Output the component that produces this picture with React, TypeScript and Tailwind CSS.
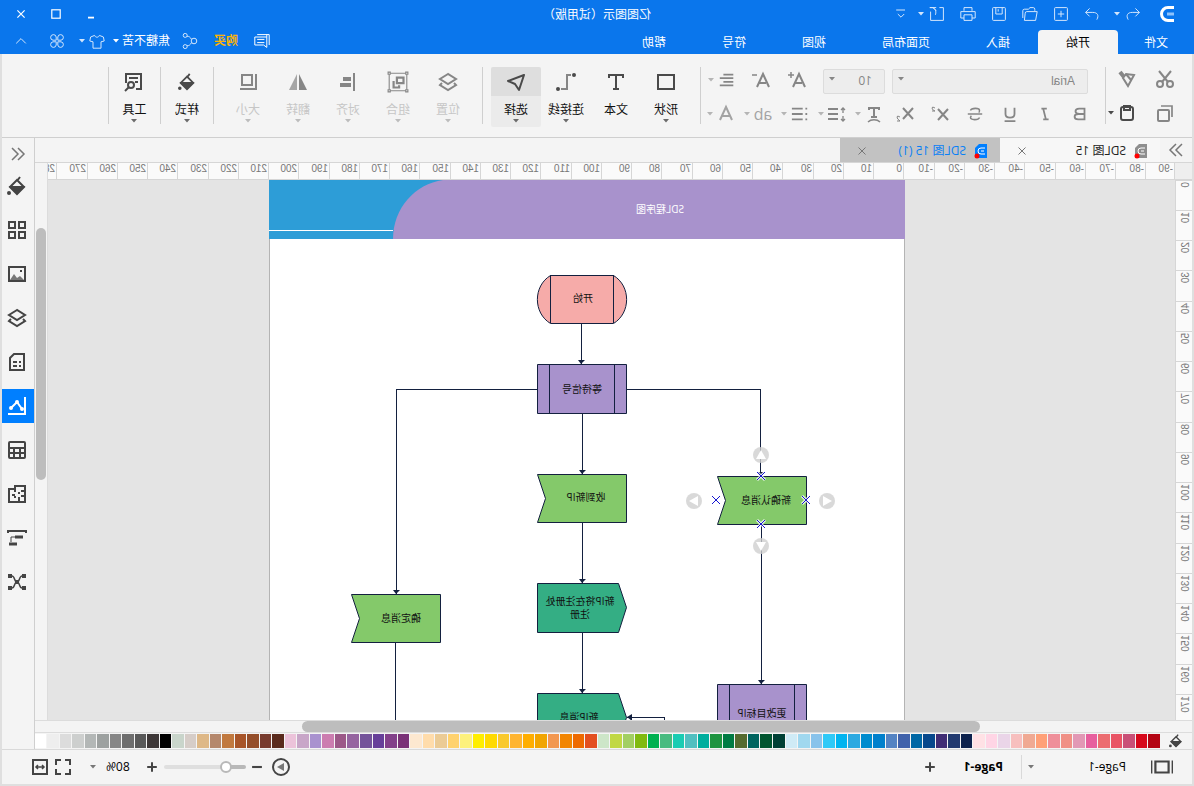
import type { ReactNode } from "react";

const palette = [
  "#b40413", "#d7081b", "#c95077", "#e95465", "#ec6d71", "#e75f9e", "#e298b5", "#f09086", "#ef8f9a", "#ffa078",
  "#f0a993", "#f7bfbe", "#ead5e8", "#ffd5e5", "#ffe1e5", "#0d224d", "#223a70", "#402d75", "#07488c", "#0067a5",
  "#4062ab", "#5383c3", "#0080cc", "#008cce", "#2ca9e1", "#00b4f0", "#2fc9f7", "#89c3eb", "#a0d8ef", "#cfebf6",
  "#004035", "#005530", "#00645f", "#556b2f", "#007b43", "#1e9440", "#00ae9e", "#51bfc0", "#1accb2", "#48bb80",
  "#00b150", "#80ba10", "#a2cf62", "#c1d843", "#cde6c8", "#e34f1f", "#ee6a00", "#f28500", "#f29850", "#f1a500",
  "#ffae00", "#ffb531", "#f9c92d", "#ffda00", "#ffee00", "#fdf17c", "#ffd26e", "#ebcb95", "#ffdcab", "#fde8d0",
  "#7a3278", "#83408a", "#673f99", "#74539a", "#9664a0", "#9c5888", "#cc7db0", "#a992cf", "#c8a6c8", "#ecc3da",
  "#5a2a1c", "#783b2e", "#954e2a", "#a85529", "#c1793f", "#b5886c", "#deb887", "#d6cdc8", "#c9d5cb", "#000000",
  "#3e3838", "#595959", "#6e6e6e", "#868686", "#9da1a0", "#b3b7b6", "#cdcfce", "#dcdcdc", "#eeeeee", "#ffffff",
];

const menuTabs = ["插入", "页面布局", "视图", "符号", "帮助"];
const xMarks = Array.from({ length: 38 }, (_, i) => i * 10 - 90);
const yMarks = Array.from({ length: 18 }, (_, i) => i * 10);

type IconProps = { children: ReactNode; className?: string; w?: number };

// every icon is drawn on a 20 unit grid
function Icon({ children, className = "size-5", w = 2 }: IconProps) {
  return (
    <svg viewBox="0 0 20 20" className={`${className} shrink-0`} fill="none" stroke="currentColor" strokeWidth={w}>
      {children}
    </svg>
  );
}

function Caret({ className = "" }: { className?: string }) {
  return (
    <svg viewBox="0 0 6 4" className={`h-1 w-1.5 shrink-0 ${className}`} fill="currentColor">
      <path d="M0 0h6L3 3.5z" />
    </svg>
  );
}

function CaretButton({ label }: { label: string }) {
  return (
    <button aria-label={label} className="flex h-6 w-2 items-center justify-center">
      <Caret />
    </button>
  );
}

function Bucket({ className }: { className?: string }) {
  return (
    <Icon className={className}>
      <path d="M7 1l3 4M10 4l7 7-7 7-7-7z" />
      <path d="M4 11h12l-6 6z" fill="currentColor" />
      <circle cx="18" cy="17" r="1" fill="currentColor" />
    </Icon>
  );
}

function Layers({ className }: { className?: string }) {
  return (
    <Icon className={className}>
      <path d="M10 2l8 5-8 5-8-5z" />
      <path d="M4 11l-2 2 8 5 8-5-2-2" />
    </Icon>
  );
}

function Divider({ className = "" }: { className?: string }) {
  return <div className={`h-[57px] w-px bg-[#cfcfcf] ${className}`} />;
}

function QuickButton({ label, children }: { label: string; children: ReactNode }) {
  return (
    <button aria-label={label} className="flex size-6 items-center justify-center">
      <Icon className="size-4" w={1.25}>{children}</Icon>
    </button>
  );
}

function TitleBar() {
  return (
    <div className="grid h-7 grid-cols-[1fr_auto_1fr] items-center text-white">
      <div className="flex items-center pl-[19px]">
        <svg viewBox="0 0 16 16" className="size-4" fill="none" stroke="#fff" strokeWidth="3">
          <path d="M1 1.500h6a6.500 6.500 0 0 1 0 13H1" />
          <path d="M1 8h7" stroke="#8fc2fb" />
        </svg>
        <div className="ml-[14px] flex items-center text-[#d3e6fc]">
          <QuickButton label="撤销">
            <path d="M7 3L2 8l5 5M2 8h9c6 0 8 4 5 9" />
          </QuickButton>
          <CaretButton label="撤销列表" />
        </div>
        <div className="ml-[9px] flex items-center gap-[7px] text-[#d3e6fc]">
          <QuickButton label="重做">
            <path d="M13 3l5 5-5 5M18 8H9c-6 0-8 4-5 9" />
          </QuickButton>
          <QuickButton label="新建">
            <rect x="2" y="2" width="16" height="16" rx="1" />
            <path d="M10 6v8M6 10h8" />
          </QuickButton>
          <QuickButton label="打开">
            <path d="M4 6V4q0-2 2-2h4l2 2h5q2 0 2 2v9M1 7h13q2 0 2 2l1 9H3z" />
          </QuickButton>
          <QuickButton label="保存">
            <rect x="2" y="2" width="16" height="16" rx="1" />
            <path d="M6 2v8h8V2M11 4v3" />
          </QuickButton>
          <QuickButton label="打印">
            <path d="M5 6V2h10v4M5 15H1V7h18v8h-4M5 11h10v7H5z" />
          </QuickButton>
          <QuickButton label="导出">
            <path d="M7 2H2v16h16V7M11 6l4-4h4M15 2c-4 2-4 6-3 9M11 2h8" />
          </QuickButton>
        </div>
        <div className="flex items-center gap-1 text-[#d3e6fc]">
          <CaretButton label="导出列表" />
          <QuickButton label="更多">
            <path d="M5 5h11M6 10l4 4 4-4" />
          </QuickButton>
        </div>
      </div>
      <h1 className="pt-0.5 text-xs">亿图图示（试用版）</h1>
      <div className="flex justify-end gap-[11px] pr-[9px]">
        <button aria-label="最小化" className="flex size-6 items-center justify-center">
          <Icon className="size-3" w={3}><path d="M5 16h10" /></Icon>
        </button>
        <button aria-label="最大化" className="flex size-6 items-center justify-center">
          <Icon className="size-3"><rect x="3" y="3" width="14" height="14" /></Icon>
        </button>
        <button aria-label="关闭" className="flex size-6 items-center justify-center">
          <Icon className="size-3"><path d="M4 4l12 12M16 4L4 16" /></Icon>
        </button>
      </div>
    </div>
  );
}

function MenuBar() {
  return (
    <div className="flex h-[26px] items-stretch justify-between text-xs text-white">
      <nav className="flex pt-0.5">
        <button className="w-[76px] pt-0.5">文件</button>
        <button className="w-20 rounded-t-sm bg-[#f4f4f4] pt-0.5 text-black">开始</button>
        {menuTabs.map((tab) => (
          <button key={tab} className="px-7 pt-0.5">{tab}</button>
        ))}
      </nav>
      <div className="flex items-center pr-[13px]">
        <button aria-label="消息">
          <Icon className="size-4" w={1.25}>
            <path d="M4 5h15v10H8l-4 3zM4 5V2M1 15V2h15M7 8h9M7 12h9" />
          </Icon>
        </button>
        <button className="ml-4 font-semibold text-[#ffb400]">购买</button>
        <button aria-label="分享" className="ml-4 text-[#d3e6fc]">
          <Icon className="size-4" w={1.25}>
            <circle cx="5" cy="10" r="3.500" />
            <circle cx="16" cy="3" r="2.500" />
            <circle cx="16" cy="17" r="2.500" />
            <path d="M8 8c2-3 3-4 6-4M8 12c2 3 3 4 6 4" />
          </Icon>
        </button>
        <button className="ml-3 flex items-center gap-[3px]">焦糖不苦 <Caret /></button>
        <button aria-label="皮肤" className="ml-2 flex items-center gap-1 text-[#d3e6fc]">
          <Icon className="size-4" w={1.25}>
            <path d="M7 3c1 3 5 3 6 0l5 2 1 5-4 1v8H5v-8l-4-1 1-5z" />
          </Icon>
          <Caret />
        </button>
        <button aria-label="应用" className="ml-[14px] text-[#d3e6fc]">
          <Icon className="size-4" w={1.25}>
            <path d="M9 9V5a3.500 3.500 0 1 0-4 4zM11 9V5a3.500 3.500 0 1 1 4 4zM9 11v4a3.500 3.500 0 1 1-4-4zM11 11v4a3.500 3.500 0 1 0 4-4z" />
          </Icon>
        </button>
        <button aria-label="收起" className="ml-5 text-[#d3e6fc]">
          <Icon className="size-4" w={1.25}><path d="M4 13l6-6 6 6" /></Icon>
        </button>
      </div>
    </div>
  );
}

function Tool({ label, children }: { label: string; children: ReactNode }) {
  return (
    <button aria-label={label} className="flex size-6 shrink-0 items-center justify-center">
      {children}
    </button>
  );
}

function DropTool({ label, children }: { label: string; children: ReactNode }) {
  return (
    <div className="flex items-center">
      <Tool label={label}>{children}</Tool>
      <span className="text-[#b5b5b5]"><CaretButton label={`${label}选项`} /></span>
    </div>
  );
}

function FontTools() {
  return (
    <div className="flex flex-col gap-2 pl-[13px] text-[#868686]">
      <div className="flex items-center">
        <div className="relative ml-1">
          <select aria-label="字体" className="h-[25px] w-[196px] appearance-none rounded-xs border border-[#dcdcdc] bg-[#ededed] pl-3 font-['Liberation_Sans',sans-serif] text-xs">
            <option>Arial</option>
          </select>
          <Caret className="pointer-events-none absolute top-2.5 right-1.5" />
        </div>
        <div className="relative ml-[7px]">
          <select aria-label="字号" className="h-[25px] w-[62px] appearance-none rounded-xs border border-[#dcdcdc] bg-[#ededed] pl-3 text-xs">
            <option>10</option>
          </select>
          <Caret className="pointer-events-none absolute top-2.5 right-1.5" />
        </div>
        <div className="ml-[14px] flex gap-3">
          <Tool label="增大字号">
            <Icon><path d="M2 17L8 4l6 13M5 13h7" /><path d="M16 2v6M13 5h6" strokeWidth="1.500" /></Icon>
          </Tool>
          <Tool label="减小字号">
            <Icon><path d="M2 17L8 4l6 13M5 13h7" /><path d="M14 5h5" strokeWidth="1.500" /></Icon>
          </Tool>
        </div>
        <div className="ml-[10px]">
          <DropTool label="对齐方式">
            <Icon className="size-[18px]"><path d="M3 4h11M3 8h15M3 12h11M3 16h15" /></Icon>
          </DropTool>
        </div>
      </div>
      <div className="flex items-center">
        <div className="flex gap-[11px]">
          <Tool label="加粗">
            <Icon className="size-[18px]"><path d="M5 4h6q4 0 4 3t-4 3H5zM5 10h7q4 0 4 3t-4 3H5z" /></Icon>
          </Tool>
          <Tool label="斜体">
            <Icon className="size-[18px]"><path d="M8 4h6M6 16h6M12 4L9 16" /></Icon>
          </Tool>
          <Tool label="下划线">
            <Icon className="size-[18px]"><path d="M5 3v7q0 4 5 4t5-4V3M4 18h12" /></Icon>
          </Tool>
          <Tool label="删除线">
            <Icon className="size-[18px]"><path d="M15 6c-1-3-10-3-10 0 0 1 0 2 1 2M2 10h16M5 14c1 3 10 3 10 0 0-1 0-1-1-2" strokeWidth="1.700" /></Icon>
          </Tool>
          <Tool label="上标">
            <Icon><path d="M2 5l10 11M12 5L2 16" /><path d="M15 4q3-2 3 0t-3 3h3" strokeWidth="1" /></Icon>
          </Tool>
          <Tool label="下标">
            <Icon><path d="M2 4l10 11M12 4L2 15" /><path d="M15 13q3-2 3 0t-3 4h3" strokeWidth="1" /></Icon>
          </Tool>
        </div>
        <div className="ml-[7px] flex gap-[5px]">
          <DropTool label="文字效果">
            <Icon><path d="M5 6V4h10v2M10 4v9M7 13h6" /><path d="M4 18c3-3 9-3 12 0" strokeWidth="1.500" /></Icon>
          </DropTool>
          <DropTool label="行距">
            <Icon><path d="M9 5h10M9 10h10M9 15h10" /><path d="M4 4v5M4 12v5M2 6l2-2 2 2M2 15l2 2 2-2" strokeWidth="1.300" /></Icon>
          </DropTool>
          <DropTool label="项目符号">
            <Icon className="size-[18px]"><path d="M2 4h2M7 4h12M2 10h2M7 10h12M2 16h2M7 16h12" /></Icon>
          </DropTool>
          <DropTool label="高亮">
            <span className="text-base leading-5 text-[#a3a3a3]">ab</span>
          </DropTool>
          <DropTool label="字体颜色">
            <Icon><path d="M4 16L10 3l6 13M6 12h8" stroke="#a3a3a3" /></Icon>
          </DropTool>
        </div>
      </div>
    </div>
  );
}

type BigProps = { label: string; caret?: boolean; tone?: string; active?: boolean; width?: string; children: ReactNode };

function BigButton({ label, caret = true, tone = "text-[#4a4a4a]", active, width = "w-[50px]", children }: BigProps) {
  return (
    <button className={`flex h-[60px] flex-col items-center ${width} ${active ? "rounded-xs bg-[#ebebeb]" : ""}`}>
      <span className={`flex h-[29px] w-full items-center justify-center ${active ? "rounded-t-xs bg-[#dedede]" : ""} ${tone}`}>
        {children}
      </span>
      <span className={`mt-1.5 text-xs leading-4 ${tone === "text-[#868686]" ? "text-[#c6c6c6]" : "text-[#111]"}`}>{label}</span>
      {caret && <Caret className={`mt-px ${tone === "text-[#868686]" ? "text-[#bdbdbd]" : "text-[#6b6b6b]"}`} />}
    </button>
  );
}

function Ribbon() {
  return (
    <div className="flex h-[84px] items-start border-b border-[#cfcfcf] bg-[#f4f4f4] pt-[13px]">
      <div className="ml-[15px] grid w-[71px] shrink-0 grid-cols-[24px_32px] gap-x-[14px] gap-y-[10px] text-[#868686]">
        <Tool label="剪切">
          <Icon><circle cx="5" cy="15" r="3" /><circle cx="15" cy="15" r="3" /><path d="M4 2l9 11M16 2L7 13" /></Icon>
        </Tool>
        <Tool label="格式刷">
          <Icon><path d="M3 6l8-1 3 4-5 8z" /><path d="M13 8l4-5" strokeWidth="4" /><path d="M6 11l5-6" /></Icon>
        </Tool>
        <Tool label="复制">
          <Icon><path d="M3 14V3h11" strokeWidth="1.700" /><rect x="6" y="7" width="11" height="11" rx="1" /></Icon>
        </Tool>
        <div className="flex items-center text-[#4a4a4a]">
          <Tool label="粘贴">
            <Icon><rect x="4" y="4" width="12" height="13" rx="2" /><path d="M7 3h6v4H7z" strokeWidth="2" /></Icon>
          </Tool>
          <CaretButton label="粘贴选项" />
        </div>
      </div>
      <Divider />
      <FontTools />
      <Divider className="ml-[5px]" />
      <div className="ml-[9px] flex">
        <BigButton label="形状">
          <Icon><rect x="2" y="3" width="16" height="14" /></Icon>
        </BigButton>
        <BigButton label="文本" caret={false}>
          <Icon><path d="M3 6V3h14v3M10 3v14M7 17h6" /></Icon>
        </BigButton>
        <BigButton label="连接线">
          <Icon><path d="M5 3h4v14h6" stroke="#868686" /><circle cx="2" cy="3" r="1" fill="currentColor" /><circle cx="18" cy="17" r="1" fill="currentColor" /></Icon>
        </BigButton>
        <BigButton label="选择" active>
          <Icon><path d="M2 3l16 6-7 3-4 6z" strokeLinejoin="round" /></Icon>
        </BigButton>
      </div>
      <Divider className="ml-2" />
      <div className="ml-[9px] flex">
        <BigButton label="位置" tone="text-[#868686]"><Layers /></BigButton>
        <BigButton label="组合" tone="text-[#868686]">
          <Icon className="size-[22px]">
            <path d="M2 2h16v16H2z" strokeWidth="1" />
            <path d="M1 1h2v2H1zM17 1h2v2h-2zM1 17h2v2H1zM17 17h2v2h-2z" strokeWidth="1" fill="#f4f4f4" />
            <path d="M5 6h6v5H5z" /><path d="M14 9v6H9v-2" />
          </Icon>
        </BigButton>
        <BigButton label="对齐" tone="text-[#868686]">
          <Icon><path d="M4 1v18" /><path d="M7 7h8M7 13h11" strokeWidth="4" /></Icon>
        </BigButton>
        <BigButton label="翻转" tone="text-[#868686]">
          <Icon><path d="M9 2v16H1z" fill="currentColor" stroke="none" /><path d="M11 2v16h8z" fill="#a5a5a5" stroke="none" /></Icon>
        </BigButton>
        <BigButton label="大小" tone="text-[#868686]">
          <Icon><rect x="6" y="3" width="10" height="10" /><path d="M2 2v15h16" /></Icon>
        </BigButton>
      </div>
      <Divider className="ml-[9px]" />
      <BigButton label="样式" width="w-[52px]"><Bucket className="size-[18px]" /></BigButton>
      <Divider />
      <BigButton label="工具" width="w-[51px]">
        <Icon><path d="M8 17H3V2h15v9M6 6h9M6 10h3" /><circle cx="13" cy="13" r="3" /><path d="M15 15l4 4" /></Icon>
      </BigButton>
      <Divider />
    </div>
  );
}

function FileTab({ name, current }: { name: string; current?: boolean }) {
  return (
    <div className={`flex w-40 items-center justify-between pt-0.5 pr-[17px] pl-3 ${current ? "bg-[#c2c2c2] text-[#0a80f5]" : "bg-[#f7f7f7] text-[#222]"}`}>
      <button className="flex items-center gap-2 text-xs">
        <svg viewBox="0 0 14 16" className="h-4 w-3.5">
          <path d="M1 1h8l4 4v10H1z" fill={current ? "#007fff" : "#8e8e8e"} />
          <path d="M3 5h4a3 3 0 0 1 0 6H3M4 8h3" fill="none" stroke="#fff" />
          <circle cx="11" cy="13" r="2.500" fill="#f00" />
        </svg>
        {name}
      </button>
      <button aria-label={`关闭 ${name}`} className="text-[#777]">
        <Icon className="size-2.5"><path d="M3 3l14 14M17 3L3 17" /></Icon>
      </button>
    </div>
  );
}

function Box({ y, x, fill, kind }: { x: number; y: number; fill: string; kind: "input" | "output" | "process" }) {
  const shapes = {
    input: "M0 0H89L81 24 89 48H0z",
    output: "M89 0H8L0 24 8 49H89z",
    process: "M0 0H89V49H0zM12 0V49M77 0V49",
  };
  return <path d={shapes[kind]} transform={`translate(${x + 0.5} ${y + 0.5})`} fill={fill} />;
}

function Diagram() {
  const arrows = [[323, 184], [144, 296], [508, 414], [322, 294], [322, 403], [322, 513], [143, 504]];
  const handles = [[144, 275, 0], [211, 321, 90], [144, 366, 180], [78, 321, 270]];
  const anchors = [[144, 296], [144, 344], [189, 320], [99, 320]];
  return (
    <svg width="636" height="1000" className="ml-[270px] shrink-0 bg-white">
      <rect width="636" height="59" fill="#2d9dd7" />
      <path d="M0 0H462C490 4 512 28 512 59H0z" fill="#a892cc" />
      <path d="M512 50.500H636" stroke="#fff" />
      <path d="M.5 59V1000M635.500 59V1000" stroke="#b4b4b4" />
      <g stroke="#13203f" strokeWidth="1" fill="none" shapeRendering="crispEdges">
        <path d="M323.500 143V184M278 209.500H144.500V296M368 209.500H508.500V414M322.500 233V294M322.500 342V403M322.500 452V513M143.500 345V504M509.500 462V1000M278 537.500H240.500V1000" />
      </g>
      <g stroke="#13203f" strokeWidth="1">
        <path d="M291.500 95.500H354.500C372 106 372 133 354.500 143.500H291.500C274 133 274 106 291.500 95.500zM291.500 95V143M354.500 95V143" fill="#f6aba9" />
        <Box x={278} y={184} kind="process" fill="#a892cc" />
        <Box x={278} y={294} kind="input" fill="#84c96a" />
        <Box x={98} y={296} kind="input" fill="#84c96a" />
        <Box x={464} y={414} kind="input" fill="#84c96a" />
        <Box x={278} y={403} kind="output" fill="#34ae84" />
        <Box x={278} y={513} kind="output" fill="#34ae84" />
        <Box x={98} y={504} kind="process" fill="#a892cc" />
      </g>
      {arrows.map(([x, y]) => (
        <path key={`${x}-${y}`} d={`M${x - 3} ${y - 4}h7l-3 4z`} fill="#13203f" />
      ))}
      <path d="M278 537l5-3v7z" transform="translate(556 0) scale(-1 1)" fill="#13203f" />
      <g fontSize="10" textAnchor="middle" fill="#111">
        <text x="245" y="33" fill="#fff">SDL程序图</text>
        <text x="322" y="122">开始</text>
        <text x="323" y="213">等待信号</text>
        <text x="319" y="321">收到新IP</text>
        <text x="139" y="324">新确认消息</text>
        <text x="504" y="442">确定消息</text>
        <text x="325" y="425">新IP将在注册处</text>
        <text x="325" y="438">注册</text>
        <text x="326" y="541">新IP消息</text>
        <text x="143" y="537">更改目标IP</text>
      </g>
      {handles.map(([x, y, turn]) => (
        <g key={turn} transform={`translate(${x} ${y}) rotate(${turn})`}>
          <circle r="8" fill="#d0d0d0" fillOpacity=".8" />
          <path d="M-5 4H5L0-5z" fill="#fff" />
        </g>
      ))}
      {anchors.map(([x, y]) => (
        <g key={`${x}-${y}`} transform={`translate(${x} ${y})`}>
          <path d="M-4-4L4 4M4-4L-4 4" stroke="#fff" strokeWidth="3" strokeOpacity=".8" />
          <path d="M-4-4L4 4M4-4L-4 4" stroke="#1414d2" strokeWidth="1" />
        </g>
      ))}
    </svg>
  );
}

function Workspace() {
  return (
    <div className="flex min-h-0 flex-1">
      <div className="flex min-w-0 flex-1 flex-col">
        <div className="flex h-[17px] shrink-0 overflow-hidden border-b border-[#d6d6d6] bg-[#fafafa] font-['Liberation_Sans',sans-serif] text-[10px] leading-3 text-[#777]">
          <div className="w-[17px] shrink-0 bg-[#eee]" />
          {xMarks.map((n, i) => (
            <div key={n} className={`shrink-0 border-l border-[#d6d6d6] pl-px ${i === 0 ? "w-[29px]" : i % 4 === 0 ? "w-[31px]" : "w-[30px]"}`}>{n}</div>
          ))}
        </div>
        <div className="flex min-h-0 flex-1">
          <div className="w-[17px] shrink-0 overflow-hidden border-r border-[#d6d6d6] bg-[#fafafa] font-['Liberation_Sans',sans-serif] text-[10px] leading-3 text-[#777]">
            {yMarks.map((n, i) => (
              <div key={n} className={`border-t border-[#d6d6d6] pt-px pr-1 [writing-mode:vertical-rl] ${i % 4 === 3 ? "h-[31px]" : "h-[30px]"}`}>{n}</div>
            ))}
          </div>
          <div className="flex min-w-0 flex-1 items-start overflow-hidden bg-[#e4e4e4]">
            <Diagram />
          </div>
        </div>
      </div>
      <div className="w-[13px] shrink-0 border-l border-[#dcdcdc] px-px pt-[65px]">
        <div className="h-[252px] rounded-full bg-[#bdbdbd]" />
      </div>
    </div>
  );
}

const panels: { label: string; icon: ReactNode }[] = [
  { label: "填充", icon: <Bucket /> },
  { label: "符号库", icon: <Icon><path d="M2 2h6v6H2zM12 2h6v6h-6zM2 12h6v6H2zM12 12h6v6h-6z" /></Icon> },
  { label: "图片", icon: <Icon><path d="M2 3h16v14H2z" /><path d="M3 16l4-4 3 2 3-4 4 6z" fill="#777" stroke="none" /><path d="M5 7h2" /></Icon> },
  { label: "图层", icon: <Layers /> },
  { label: "备注", icon: <Icon><path d="M3 2h10l4 4v12H3z" /><path d="M6 10h2M10 10h4M6 14h2M10 14h4" /></Icon> },
  { label: "图表", icon: <Icon><path d="M2 1v17h17" /><path d="M5 13l5-7 6 6" /><circle cx="5" cy="13" r="1" /><circle cx="10" cy="6" r="1" /><circle cx="16" cy="12" r="1" /></Icon> },
  { label: "表格", icon: <Icon><rect x="2" y="2" width="16" height="16" rx="1" /><path d="M2 8h16M2 13h16M7 8v10M13 8v10" /></Icon> },
  { label: "平面图", icon: <Icon><path d="M2 2h10v3h6v13H2zM2 7h4M8 10v-2M2 12h4M8 18v-5M12 5v3M12 12v2M12 11h3" /></Icon> },
  { label: "甘特图", icon: <Icon><path d="M1 5V3h18v2" /><path d="M4 9h8M10 16h8" strokeWidth="3" /><path d="M12 9h4v5" strokeWidth="1" /></Icon> },
  { label: "思维导图", icon: <Icon><path d="M1 4h4M15 4h4M1 16h4M15 16h4" strokeWidth="4" /><path d="M5 4c3 0 2 6 5 6s2-6 5-6M5 16c3 0 2-6 5-6s2 6 5 6" strokeWidth="1.500" /><path d="M8 10h4" strokeWidth="4" /></Icon> },
];

function SidePanel() {
  return (
    <aside className="flex w-[33px] shrink-0 flex-col border-l border-[#cfcfcf] bg-[#f4f4f4] text-[#444]">
      <button aria-label="展开面板" className="flex h-[31px] items-center justify-center text-[#777]">
        <Icon w={1.5}><path d="M10 4l-6 6 6 6M16 4l-6 6 6 6" /></Icon>
      </button>
      <div className="flex flex-col gap-2.5">
        {panels.map((panel) => (
          <button
            key={panel.label}
            aria-label={panel.label}
            className={`flex h-[34px] items-center justify-center pl-px ${panel.label === "图表" ? "bg-[#007fff] text-white" : ""}`}
          >
            {panel.icon}
          </button>
        ))}
      </div>
    </aside>
  );
}

function StatusBar() {
  return (
    <footer className="flex h-[34px] shrink-0 items-center justify-between bg-[#f4f4f4] text-xs text-[#444]">
      <div className="flex items-center">
        <button aria-label="页面视图" className="ml-[19px]">
          <Icon className="size-[22px]"><path d="M4 5h12v10H4z" /><path d="M.5 4v12M19.500 4v12" strokeWidth="1.500" /></Icon>
        </button>
        <button className="ml-[25px] flex items-center text-black">
          <span className="w-[92px] text-left">Page-1</span>
          <Caret className="text-[#777]" />
        </button>
        <div className="ml-1.5 h-6 w-px bg-[#d9d9d9]" />
        <button className="ml-[18px] font-bold text-black">Page-1</button>
        <button aria-label="添加页面" className="ml-[26px]">
          <Icon className="size-4"><path d="M10 4v12M4 10h12" strokeWidth="2.500" /></Icon>
        </button>
      </div>
      <div className="flex items-center pr-7">
        <button aria-label="播放">
          <Icon><circle cx="10" cy="10" r="8" /><path d="M7 6l7 4-7 4z" fill="#777" stroke="none" /></Icon>
        </button>
        <button aria-label="缩小" className="ml-[7px]">
          <Icon className="size-3.5" w={3}><path d="M3 10h14" /></Icon>
        </button>
        <input
          type="range"
          aria-label="缩放"
          min="0"
          max="100"
          defaultValue="19"
          className="ml-1 h-1 w-[82px] appearance-none rounded-full bg-[linear-gradient(to_right,#b8b8b8_19px,#dfdfdf_19px)] [&::-webkit-slider-thumb]:size-3 [&::-webkit-slider-thumb]:appearance-none [&::-webkit-slider-thumb]:rounded-full [&::-webkit-slider-thumb]:border-2 [&::-webkit-slider-thumb]:border-[#b8b8b8] [&::-webkit-slider-thumb]:bg-white"
        />
        <button aria-label="放大" className="ml-1">
          <Icon className="size-4"><path d="M10 4v12M4 10h12" strokeWidth="2.500" /></Icon>
        </button>
        <button className="ml-[14px] flex items-center gap-2.5 text-black">80% <Caret className="text-[#777]" /></button>
        <button aria-label="全屏" className="ml-[17px]">
          <Icon><path d="M3 8V3h5M12 3h5v5M17 12v5h-5M8 17H3v-5" /></Icon>
        </button>
        <button aria-label="适合宽度" className="ml-[3px]">
          <Icon><path d="M3 3h14v14H3z" /><path d="M6 10h8M8 8l-2 2 2 2M12 8l2 2-2 2" strokeWidth="1.500" /></Icon>
        </button>
      </div>
    </footer>
  );
}

export default function App() {
  return (
    <div className="flex h-screen -scale-x-100 flex-col overflow-hidden bg-[#f4f4f4] font-['Open_Sans','Noto_Sans_CJK_SC',sans-serif]">
      <header className="shrink-0 bg-[#0a76ec]">
        <TitleBar />
        <MenuBar />
      </header>
      <div className="flex min-h-0 flex-1 flex-col border-x-2 border-b-2 border-[#dfdfdf]">
        <Ribbon />
        <div className="flex min-h-0 flex-1 border-b border-[#d9d9d9]">
          <main className="flex min-w-0 flex-1 flex-col">
            <div className="flex h-[25px] shrink-0 border-b border-[#d6d6d6]">
              <button aria-label="展开列表" className="flex w-8 items-center justify-center text-[#777]">
                <Icon w={1.5}><path d="M4 4l6 6-6 6M10 4l6 6-6 6" /></Icon>
              </button>
              <FileTab name="SDL图 15" />
              <FileTab name="SDL图 15 (1)" current />
            </div>
            <Workspace />
            <div className="h-[13px] shrink-0 border-y border-[#dcdcdc] pr-[267px] pl-[212px]">
              <div className="h-full rounded-full bg-[#bdbdbd]" />
            </div>
            <div className="flex h-4 shrink-0">
              <button aria-label="填充颜色" className="flex w-8 items-center justify-center text-[#444]">
                <Bucket className="size-3.5" />
              </button>
              <div className="flex flex-1 gap-px py-px">
                {palette.map((color) => (
                  <button key={color} aria-label={color} className="flex-1" style={{ backgroundColor: color }} />
                ))}
              </div>
            </div>
          </main>
          <SidePanel />
        </div>
        <StatusBar />
      </div>
    </div>
  );
}
